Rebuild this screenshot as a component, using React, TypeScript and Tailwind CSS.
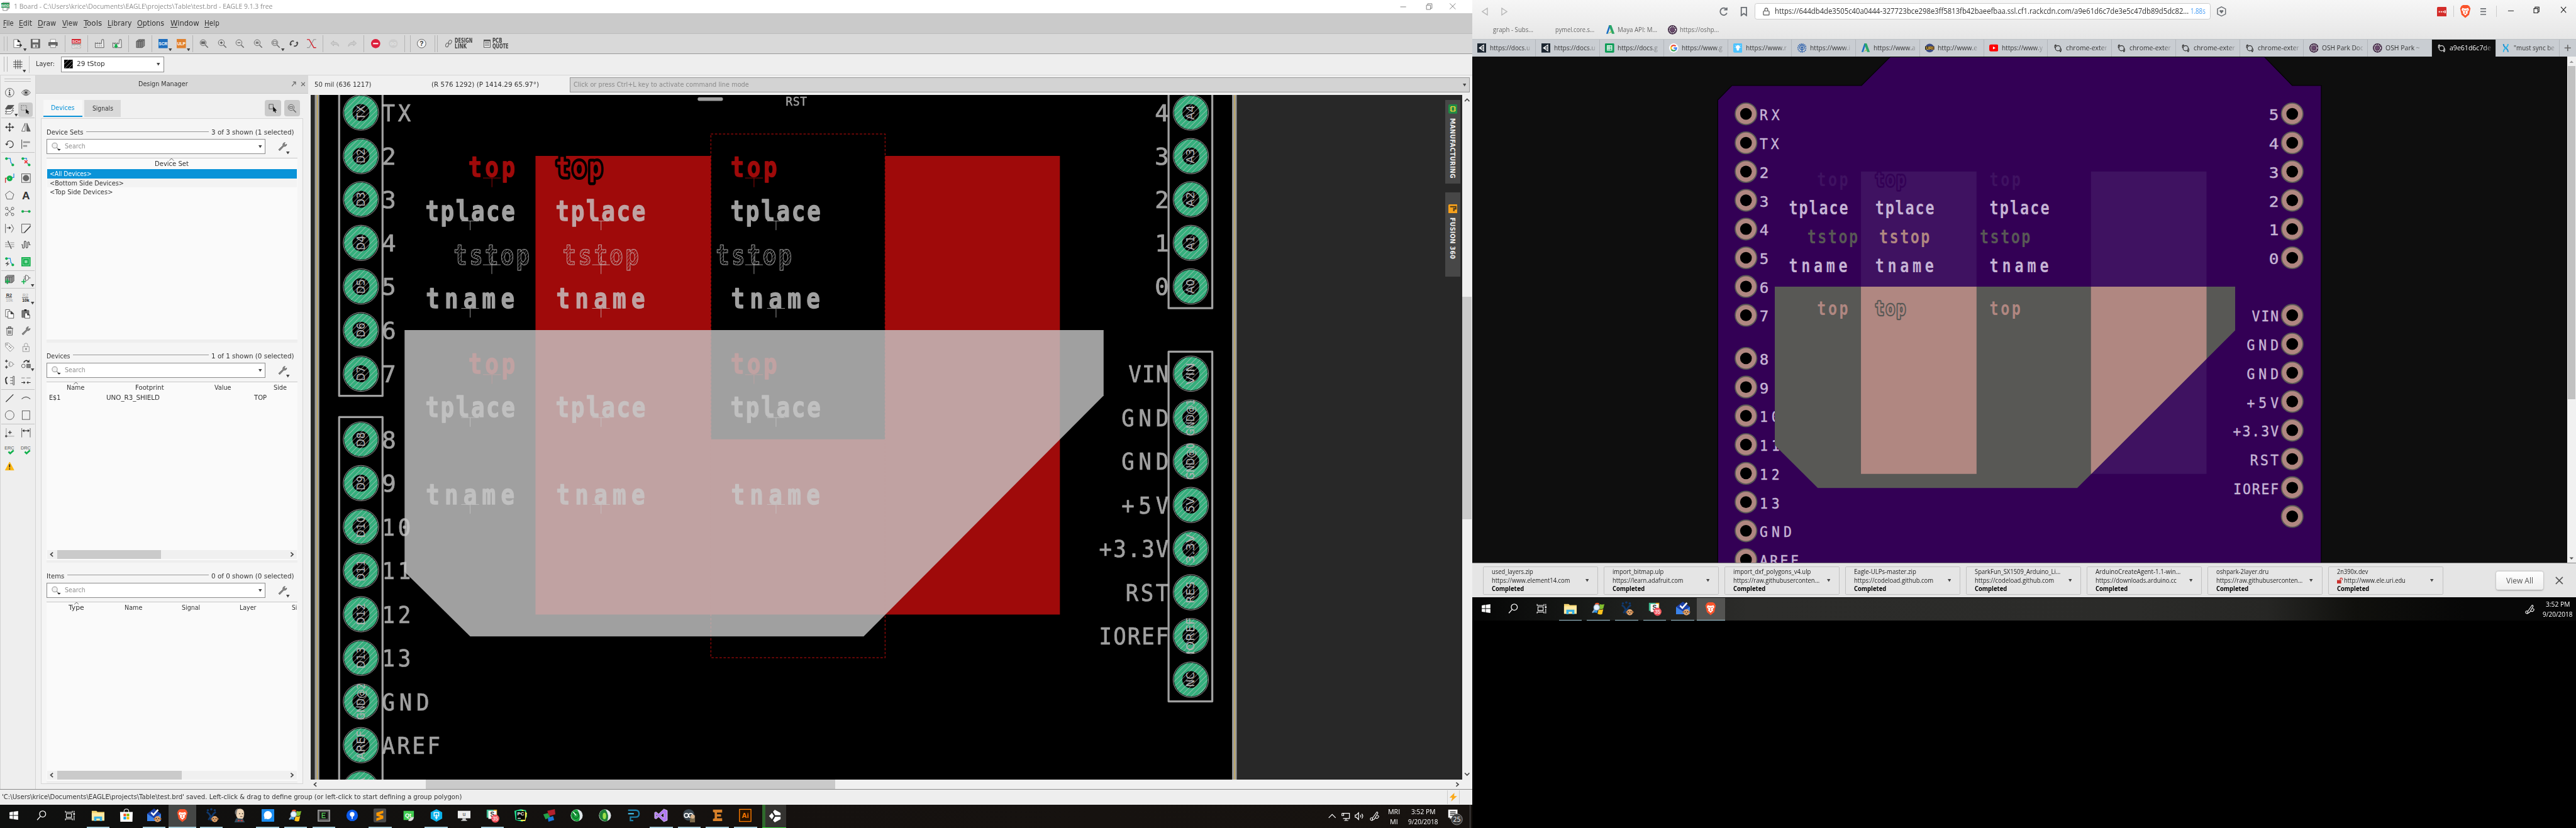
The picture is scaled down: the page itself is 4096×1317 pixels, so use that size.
import React, { useLayoutEffect, useRef } from "react";

/* ---------- text helpers ---------- */

/** One line of text condensed or stretched to occupy exactly `w` pixels. */
function T({ w, className = "", children }: { w: number; className?: string; children: React.ReactNode }) {
  const ref = useRef<HTMLSpanElement>(null);
  useLayoutEffect(() => {
    const outer = ref.current!;
    const inner = outer.firstElementChild as HTMLElement;
    inner.style.transform = "none";
    const k = outer.getBoundingClientRect().width / inner.getBoundingClientRect().width;
    inner.style.transform = `scaleX(${k})`;
  });
  return (
    <span ref={ref} className={"inline-block shrink-0 whitespace-nowrap " + className} style={{ width: w }}>
      <span className="inline-block origin-left">{children}</span>
    </span>
  );
}

const MONO = '"DejaVu Sans Mono", monospace';

/** Canvas text drawn between x0 and x1 on a baseline: narrow glyphs, widely spaced. */
function S({ x0, x1, y, size, t, bold, fill = "#c9c9c9", stroke, sw = 0, opacity = 1 }: {
  x0: number; x1: number; y: number; size: number; t: string; bold?: boolean; fill?: string; stroke?: string; sw?: number; opacity?: number;
}) {
  const ink = size * (bold ? 0.53 : 0.49);
  const k = t.length === 1 ? (x1 - x0) / ink : bold ? 0.8 : 0.92;
  const pitch = t.length === 1 ? 0 : (x1 - x0 - ink * k) / (t.length - 1);
  const spacing = t.length === 1 ? 0 : pitch / k - size * 0.602;
  return (
    <text transform={`translate(${x0 - size * 0.05 * k} ${y}) scale(${k} 1)`} letterSpacing={spacing} fontFamily={MONO} fontSize={size}
      fontWeight={bold ? 700 : 400} fill={fill} stroke={stroke ?? "none"} strokeWidth={sw} strokeLinejoin="round" paintOrder="stroke" opacity={opacity}>
      {t}
    </text>
  );
}

/* ---------- small icons ---------- */

function Ic({ children, s = "#555" }: { children?: React.ReactNode; s?: string }) {
  return (
    <svg viewBox="0 0 16 16" className="size-4 shrink-0 overflow-visible" fill="none" stroke={s} strokeWidth="1">
      {children}
    </svg>
  );
}
const Caret = ({ className = "" }: { className?: string }) => (
  <svg viewBox="0 0 6 5" className={"h-[5px] w-[6px] shrink-0 " + className}><path d="M0 0H6L3 5Z" fill="#444" /></svg>
);
const Mag = ({ children }: { children?: React.ReactNode }) => (
  <Ic s="#666"><circle cx="6.5" cy="6.5" r="5.2" /><path d="M10.3 10.3 15 15" strokeWidth="1.6" />{children}</Ic>
);
const Wrench = () => (
  <Ic><path d="M1 13 8.5 6C8 3 9.500 .8 12.500 .8L11 3 13 5 15.200 3.500C15.300 6.300 13 8 10.200 7.500L3 15Z" fill="#888" stroke="#555" strokeWidth=".8" /></Ic>
);
const G = "#12b04c", B = "#1b8ce0", D = "#333";
const Txt = ({ x, y, s, f, children, b = true }: { x: number; y: number; s: number; f: string; children: string; b?: boolean }) => (
  <text x={x} y={y} fontSize={s} fill={f} stroke="none" fontWeight={b ? 700 : 400} fontFamily='"Liberation Sans", sans-serif' textAnchor="middle">{children}</text>
);

type Tool = { i: React.ReactNode; c?: boolean; on?: boolean };
const topTools: (Tool | "|")[] = [
  { i: <Ic><path d="M1 1H8L12 5V15H1Z" fill="#fff" stroke="#777" /><path d="M8 1V5H12Z" fill="#222" stroke="#222" /><path d="M6 11H14M11.500 8.500 14.500 11 11.500 13.500" stroke="#222" strokeWidth="1.300" /></Ic>, c: true },
  { i: <Ic><path d="M.500 .500H15.500V15.500H.500Z" fill="#666" /><path d="M3 1H13V6H3Z" fill="#e8e8e8" stroke="none" /><path d="M3.500 9.500H12.500V15H3.500Z" fill="#ddd" stroke="none" /><path d="M9 10.500V14.500" strokeWidth="2" /></Ic> },
  { i: <Ic><path d="M3.500 .500H12.500V6H3.500Z" fill="#fff" stroke="#999" /><path d="M.500 6H15.500V11.500H.500Z" fill="#666" /><path d="M3.500 10H12.500V15H3.500Z" fill="#eee" stroke="#888" /></Ic> },
  "|",
  { i: <Ic><rect width="16" height="8" fill="#d3232e" stroke="none" /><rect y="8" width="16" height="8" fill="#aaa" stroke="none" /><Txt x={8} y={6.900} s={6.800} f="#fff">SCH</Txt><Txt x={8} y={15} s={6.800} f="#fff">BRD</Txt></Ic> },
  "|",
  { i: <Ic><path d="M.500 15V6.500L4 9V6.500L8 9V6.500L11 9 12 1H15L15.500 15Z" fill="#efefef" /><path d="M3 12H12" strokeDasharray="2 1.500" /></Ic> },
  { i: <Ic><path d="M.500 15V6.500L4 9V6.500L8 9V6.500L11 9 12 1H15L15.500 15Z" fill="#efefef" /><path d="M4 9H8V12H10L6 16 2 12H4Z" fill={G} stroke="none" /></Ic> },
  "|",
  { i: <Ic><path d="M1 4 5 1H15V12L11 15H1Z" fill="#888" /><path d="M1 4H11V15M11 4 15 1M4.500 4V15M8 4V15M4.500 4 8 1M8 4 12 1" /></Ic> },
  "|",
  { i: <Ic><rect width="16" height="16" fill="#1f6fbf" stroke="none" /><Txt x={8} y={10.700} s={7.200} f="#fff">SCR</Txt></Ic>, c: true },
  { i: <Ic><rect width="16" height="16" fill="#e0812e" stroke="none" /><Txt x={8} y={10.700} s={7.200} f="#fff">ULP</Txt></Ic>, c: true },
  "|",
  { i: <Mag><rect x="3.500" y="4.500" width="6" height="4" fill="#666" /></Mag> },
  { i: <Mag><path d="M6.500 4V9M4 6.500H9" stroke="#222" /></Mag> },
  { i: <Mag><path d="M4 6.500H9" stroke="#222" /></Mag> },
  { i: <Mag><path d="M4 5.500H9M4 7.500H9" stroke="#222" /></Mag> },
  { i: <Mag><rect x="3.500" y="4.500" width="6" height="4" /></Mag>, c: true },
  { i: <Ic><path d="M2 10C1 5 5 2.500 8 4M14 6C15 11 11 13.500 8 12" stroke="#444" strokeWidth="1.800" /><path d="M0 8.500H5L2.500 12ZM11 7.500H16L13.500 4Z" fill="#444" stroke="none" /></Ic> },
  { i: <Ic><path d="M0 15H4L12 1H16" stroke="#999" strokeWidth="1.300" /><path d="M0 1H4L12 15H16" stroke="#d3232e" strokeWidth="1.500" /></Ic> },
  "|",
  { i: <Ic s="#b5b5b5"><path d="M6 3 1 7.500 6 12V9.500C10 9 13 10 15 13 15 8 11 5.500 6 5.500Z" fill="#ccc" /></Ic> },
  { i: <Ic s="#b5b5b5"><path d="M10 3 15 7.500 10 12V9.500C6 9 3 10 1 13 1 8 5 5.500 10 5.500Z" fill="#ccc" /></Ic> },
  "|",
  { i: <Ic><circle cx="8" cy="8" r="8" fill="#dc1f3c" stroke="none" /><path d="M3.500 8H12.500" stroke="#fff" strokeWidth="2.200" /></Ic> },
  { i: <Ic><circle cx="8" cy="8" r="7.800" fill="#cdcdcd" stroke="none" /><Txt x={8} y={10.500} s={7} f="#e6e6e6">GO</Txt></Ic> },
  "|", "|",
  { i: <Ic><circle cx="8" cy="8" r="7.500" fill="#f4f4f4" /><Txt x={8} y={12} s={11} f="#333">?</Txt></Ic> },
];

const sideTools: ([Tool, Tool | null] | "-")[] = [
  [{ i: <Ic><circle cx="8" cy="8" r="7.500" /><path d="M8 7V12M6 12H10M6.500 7H8" stroke={D} strokeWidth="1.400" /><circle cx="8" cy="4" r="1.200" fill={D} stroke="none" /></Ic> },
   { i: <Ic><path d="M.500 8C4 1.500 12 1.500 15.500 8 12 14.500 4 14.500 .500 8Z" /><circle cx="8" cy="8" r="4" /><circle cx="8" cy="8" r="2" fill={D} /></Ic> }],
  [{ i: <Ic><path d="M5 9.500 15 9.500 10 15.500H.500Z" fill="#fff" /><path d="M5 5.500H15L10 11.500H.500Z" fill="#fff" /><path d="M5 .500H15.500L10 7H.500Z" fill="#555" /></Ic>, c: true },
   { i: <Ic><path d="M1 1H10V9H1Z" strokeDasharray="1.500 1.500" /><path d="M9 7V15L11 13 12.500 16 14 15 12.500 12.500H15Z" fill="#111" stroke="none" /></Ic>, on: true }],
  "-",
  [{ i: <Ic s={D}><path d="M2 8H14M8 2V14" strokeWidth="1.300" /><path d="M0 8 3.500 5.500V10.500ZM16 8 12.500 5.500V10.500ZM8 0 5.500 3.500H10.500ZM8 16 5.500 12.500H10.500Z" fill={D} stroke="none" /></Ic> },
   { i: <Ic><path d="M6.500 1V15H.500Z" fill="#fff" /><path d="M9.500 1V15H15.500Z" fill="#666" /></Ic> }],
  [{ i: <Ic s={D}><path d="M3 8C3 3 7 1.500 10 2.500 14.500 4 15.500 9 13 12 11.500 14 9 14 7.500 13.500" strokeWidth="1.300" /><path d="M0 7H6L3 10.500Z" fill={D} stroke="none" /></Ic> },
   { i: <Ic><path d="M.700 0V16" stroke={D} /><path d="M3 4.500H15M3 11H10" stroke="#999" strokeWidth="3" /></Ic> }],
  "-",
  [{ i: <Ic><path d="M2 2H9L10 9 14 14" stroke={B} strokeWidth="1.300" /><circle cx="2.500" cy="2.500" r="2.300" fill={G} stroke="none" /><circle cx="13.500" cy="13.500" r="2.300" fill={G} stroke="none" /></Ic> },
   { i: <Ic><path d="M2 2H9V5M10 10 14 14" stroke={B} strokeWidth="1.300" /><circle cx="2.500" cy="2.500" r="2.300" fill={G} stroke="none" /><circle cx="13.500" cy="13.500" r="2.300" fill={G} stroke="none" /><path d="M5.500 5.500 10.500 10.500M10.500 5.500 5.500 10.500" stroke="#e33" strokeWidth="1.800" /></Ic> }],
  [{ i: <Ic><path d="M.700 16V8H6" stroke="#c33" strokeWidth="1.500" /><path d="M15.300 0V7H10" stroke={B} strokeWidth="1.300" /><circle cx="8" cy="8.500" r="5" fill={G} stroke="none" /><circle cx="8" cy="8.500" r=".800" fill="#fff" stroke="none" /></Ic> },
   { i: <Ic><rect x=".500" y=".500" width="15" height="15" /><circle cx="8" cy="8" r="5.500" fill="#666" stroke="none" /></Ic> }],
  [{ i: <Ic><path d="M8 1 15.300 6.500 12.500 15H3.500L.700 6.500Z" /></Ic> },
   { i: <Ic><Txt x={8} y={15} s={19} f="#333">A</Txt></Ic> }],
  [{ i: <Ic><path d="M4 4 12 12M12 4 4 12" /><circle cx="2.800" cy="2.800" r="2.200" /><circle cx="13.200" cy="2.800" r="2.200" /><circle cx="2.800" cy="13.200" r="2.200" /><circle cx="13.200" cy="13.200" r="2.200" /></Ic> },
   { i: <Ic><path d="M2 8H14" stroke="#777" strokeWidth="1.400" /><circle cx="2.300" cy="8" r="2.300" fill={G} stroke="none" /><circle cx="13.700" cy="8" r="2.300" fill={G} stroke="none" /></Ic> }],
  [{ i: <Ic><path d="M.700 0V16M11 1 15 8 11 15" /><path d="M3 7H8" stroke={D} /><path d="M7 4.500 10.500 7 7 9.500Z" fill={D} stroke="none" /></Ic> },
   { i: <Ic><path d="M15.500 5V.500H.500V15.500H5" /><path d="M5 15.500 15.500 4.500" strokeWidth="1.600" stroke={D} /></Ic> }],
  [{ i: <Ic s="#888"><path d="M0 4.500H6M0 8H7M0 11.500H8M9 4.500H16M9.500 8H16M10.500 11.500H16" /><path d="M5 1 11 15" stroke={D} strokeWidth="1.200" /></Ic> },
   { i: <Ic><path d="M0 8H2V13Q3.500 15 5 13V3Q6.500 .500 8 3V12Q9.500 15 11 12V4Q12.500 2 13.500 4V8H16" stroke="#444" strokeWidth="1.200" /></Ic> }],
  [{ i: <Ic><path d="M2 2H9L10 9 14 14" stroke={B} strokeWidth="1.300" /><circle cx="2.500" cy="2.500" r="2.300" fill={G} stroke="none" /><circle cx="13.500" cy="13.500" r="2.300" fill={G} stroke="none" /><path d="M6 7 0 12H4L2 16 8 11H4.500Z" fill="#555" stroke="none" /></Ic> },
   { i: <Ic><rect width="16" height="16" fill={G} stroke="none" /><rect x="2.500" y="2.500" width="11" height="11" stroke="#fff" strokeDasharray="1.200 1" /><rect x="5.500" y="5.500" width="5" height="5" fill="#8fe0ae" stroke="none" /></Ic> }],
  "-",
  [{ i: <Ic><path d="M.500 4 4 1H15.500V11L12 14H.500Z" fill="#999" /><path d="M.500 4H12V14M12 4 15.500 1M4 4V14M8 4V14" /><path d="M4 7V16M0 11.500H8.500" stroke={G} strokeWidth="2" /></Ic> },
   { i: <Ic><path d="M7 1H9Q13 2 13 5.500 13 9 9 10H7ZM4 4H7M4 7H7M13 5.500H16" /><path d="M4 8V16M0 12H8" stroke={G} strokeWidth="1.800" /></Ic>, c: true }],
  "-",
  [{ i: <Ic><Txt x={7} y={7} s={8} f="#333">R2</Txt><path d="M1 8H12" /><Txt x={7.500} y={15} s={7.500} f="#bbb">10k</Txt></Ic> },
   { i: <Ic><Txt x={7} y={7} s={8} f="#bbb">R2</Txt><path d="M1 8H12" /><Txt x={7.500} y={15} s={7.500} f="#222">10k</Txt></Ic>, c: true }],
  [{ i: <Ic><path d="M1 .500H8V13H1Z" fill="#fff" /><path d="M5 3.500H11L15 7.500V15.500H5Z" fill="#fff" /><path d="M10 3.500V8H15Z" fill="#222" /></Ic> },
   { i: <Ic><path d="M1 2H13V14H1Z" fill="#777" /><path d="M5 0H9V3H5Z" fill="#222" stroke="none" /><path d="M6 6.500H11L14.500 10V15.500H6Z" fill="#fff" /><path d="M10.500 6.500V10H14.500Z" fill="#222" /></Ic> }],
  [{ i: <Ic><path d="M3 4H13L12.500 15.500H3.500Z" fill="#eee" /><path d="M2 3.500H14M6 3V1H10V3" strokeWidth="1.400" /><path d="M6 7V13M8 7V13M10 7V13" strokeWidth="1.200" /></Ic> },
   { i: <Wrench /> }],
  [{ i: <Ic s="#888"><path d="M.500 1 6 .500 15.500 9 9 15.500 1 7Z" fill="#f8f8f8" /><circle cx="3.500" cy="3.500" r="1.200" /><path d="M6 8 9 5.500M8 10.500 11.500 7.500M6 5 11 10" /></Ic> },
   { i: <Ic s="#999"><rect x="2.500" y="7" width="11" height="8.500" fill="#eee" /><path d="M5 7V4Q5 1 8 1 11 1 11 4V7" /><circle cx="8" cy="11" r="1.200" fill="#555" /></Ic> }],
  [{ i: <Ic><path d="M2.500 0V5M0 2.500H5M2.500 10.500V15.500M0 13H5" stroke={D} strokeWidth="1.300" /><path d="M8 4H10Q14 5 14 8 14 11 10 12H8ZM5.500 6.500H8M5.500 9.500H8M14 8H16" stroke="#888" /></Ic> },
   { i: <Ic><path d="M4 5Q8 -1 12 3.500" stroke={D} strokeWidth="1.800" /><path d="M9.500 5H14V0Z" fill={D} stroke="none" /><circle cx="3.500" cy="11" r="3.200" /><rect x="9.500" y="8" width="6" height="6" fill="#888" /></Ic>, c: true }],
  [{ i: <Ic><path d="M4 2Q0 4 1.500 8 1 12 4 14" stroke={D} strokeWidth="2" /><path d="M9 3H14M9 8H14M9 13H14" /><path d="M14 .500H16V15.500H14Z" fill="#fff" /></Ic> },
   { i: <Ic><path d="M0 3.500H6M9 3.500H16" stroke="#999" strokeWidth="1.400" /><path d="M0 11.500H5M11 11.500H16" stroke={D} strokeWidth="1.300" /><path d="M4 9 7 11.500 4 14ZM12 9 9 11.500 12 14Z" fill={D} stroke="none" /></Ic> }],
  "-",
  [{ i: <Ic><path d="M1.500 14.500 14.500 1.500" strokeWidth="1.300" stroke={D} /></Ic> }, { i: <Ic><path d="M.500 9.500Q8 2 15.500 9.500" strokeWidth="1.300" /></Ic> }],
  [{ i: <Ic><ellipse cx="8" cy="8" rx="7.700" ry="7.800" /></Ic> }, { i: <Ic><rect x="1.500" y=".500" width="13" height="15" /></Ic> }],
  "-",
  [{ i: <Ic s="#bbb"><path d="M2 0V14H16" strokeWidth="1.800" /><circle cx="2" cy="14" r="2" fill="#555" stroke="none" /><path d="M8.500 4.500V10.500M5.500 7.500H11.500" stroke={D} strokeWidth="1.300" /></Ic> },
   { i: <Ic><path d="M.700 0V16M15.300 0V16" /><path d="M3 4.500H13" stroke={D} strokeWidth="1.300" /><path d="M1.500 4.500 5 2V7ZM14.500 4.500 11 2V7Z" fill={D} stroke="none" /></Ic> }],
  [{ i: <Ic><Txt x={7.500} y={7.500} s={8} f="#555" b={false}>ERC</Txt><path d="M6 11.500 9 14.500 15 9" stroke={G} strokeWidth="2.800" /></Ic> },
   { i: <Ic><Txt x={7.500} y={7.500} s={8} f="#555" b={false}>DRC</Txt><path d="M6 11.500 9 14.500 15 9" stroke={G} strokeWidth="2.800" /></Ic> }],
  [{ i: <Ic><path d="M8 1 15.500 15H.500Z" fill="#fdb813" stroke="#fdb813" /><path d="M8 5V10.500M8 12V14" stroke="#222" strokeWidth="1.800" /></Ic> }, null],
];

const Grip = () => (
  <div className="flex h-[26px] w-[15px] shrink-0 gap-1 pl-[7px]"><div className="w-px bg-[#b8b8b8]" /><div className="w-px bg-[#b8b8b8]" /></div>
);

/* ---------- EAGLE window ---------- */

const menus: [string, number, number][] = [
  ["File", 18, 10], ["Edit", 23, 10], ["Draw", 32, 10], ["View", 27, 10], ["Tools", 32, 10], ["Library", 42, 10], ["Options", 47, 10], ["Window", 50, 10], ["Help", 26, 0],
];

function TopBars() {
  return (
    <>
      <div className="flex h-[23px] shrink-0 items-center bg-white text-[12px] text-[#8f8f8f]">
        <svg viewBox="0 0 16 16" className="ml-[2px] size-4"><path d="M3 1H14V11L10 15H3Z" fill="#fff" stroke="#888" /><path d="M10 15V11H14" fill="#ddd" stroke="#888" /><rect x="0" y="2" width="14" height="8" fill="#158a43" /><text x="7" y="8.600" fontSize="6.500" fontWeight="700" textAnchor="middle" fill="#fff" fontFamily="Liberation Sans">BRD</text></svg>
        <T w={450} className="ml-[6px] font-['Open_Sans',sans-serif]">1 Board - C:\Users\krice\Documents\EAGLE\projects\Table\test.brd - EAGLE 9.1.3 free</T>
        <div className="flex-1" />
        <svg viewBox="0 0 116 12" className="mr-[14px] h-3 w-[116px] text-[#777]" fill="none" stroke="currentColor" strokeWidth="1"><path d="M5 6.500H15M50.500 3.500H57.500V11H50.500ZM52.500 3.500V1H60V9H57.500M91 .500 101 10.500M101 .500 91 10.500" /></svg>
      </div>
      <div className="flex h-[36px] shrink-0 items-center border-b border-[#bdbdbd] bg-[#cacaca] pl-[5px] text-[14px] text-[#333]">
        {menus.map(([m, w, g]) => (
          <div key={m} className="flex"><T w={w}><span className="underline underline-offset-2">{m[0]}</span>{m.slice(1)}</T><div style={{ width: g }} /></div>
        ))}
      </div>
      <div className="flex h-[35px] shrink-0 items-center border-b-[1.5px] border-[#999] bg-[#d9d9d9]">
        <Grip />
        {topTools.map((t, i) => t === "|" ? (
          <div key={i} className="flex h-[30px] w-[9px] shrink-0 justify-center"><div className="w-px bg-[#b4b4b4]" /></div>
        ) : (
          <div key={i} className="relative flex w-[31.1px] shrink-0 justify-center">{t.i}{t.c && <Caret className="absolute right-0 -bottom-[5px]" />}</div>
        ))}
        <div className="ml-[7px] flex h-[30px] gap-1"><div className="w-px bg-[#b4b4b4]" /><div className="w-px bg-[#b4b4b4]" /></div>
        <div className="ml-[13px] flex items-center gap-[4px] text-[10.500px] leading-[10px] font-bold text-[#444]">
          <svg viewBox="0 0 14 16" className="h-4 w-3" fill="none" stroke="#555" strokeWidth="1.200"><rect x="1" y="7" width="5.500" height="8" rx="2.500" transform="rotate(25 4 11)" /><rect x="7" y="1" width="5.500" height="8" rx="2.500" transform="rotate(25 10 5)" /></svg>
          <div className="flex flex-col"><T w={31}>DESIGN</T><T w={21}>LINK</T></div>
          <svg viewBox="0 0 12 14" className="ml-[15px] h-[14px] w-3" fill="none" stroke="#555"><rect x=".500" y=".500" width="11" height="13" fill="#eee" /><path d="M0 1.500H12" strokeWidth="3" /><path d="M2 5H10M2 7.500H10M2 10H10" /></svg>
          <div className="flex flex-col"><T w={17}>PCB</T><T w={28}>QUOTE</T></div>
        </div>
      </div>
      <div className="flex h-[37px] shrink-0 items-center border-b border-[#d6d6d6] bg-[#eee] text-[12px] text-[#333]">
        <Grip />
        <div className="relative flex w-[31px] justify-center"><Ic s="#444"><path d="M4 0V16M8 0V16M12 0V16M0 4H16M0 8H16M0 12H16" /></Ic><Caret className="absolute right-[1px] -bottom-[6px]" /></div>
        <div className="ml-[4px] h-[30px] w-px bg-[#c4c4c4]" />
        <T w={33} className="ml-[11px]">Layer:</T>
        <div className="ml-[11px] flex h-[27px] w-[179px] items-center border border-[#8c8c8c] bg-white pl-[5px]">
          <svg viewBox="0 0 15 15" className="size-[15px]"><rect width="15" height="15" /><path d="M0 8 8 0M1 15 15 1M8 15 15 8" stroke="#aaa" strokeWidth="1" /></svg>
          <T w={49} className="ml-[6px]">29 tStop</T>
          <Caret className="mr-[5px] ml-auto" />
        </div>
      </div>
    </>
  );
}

function SideBar() {
  return (
    <div className="flex w-[62px] shrink-0 flex-col border-x border-[#d3d3d3] bg-[#eee] px-[1px] pt-[6px]">
      <div className="mx-[6px] h-[5px] shrink-0 border-y border-[#c0c0c0]" />
      <div className="h-[5px] shrink-0" />
      {sideTools.map((r, i) => r === "-" ? <div key={i} className="h-[2px] shrink-0 border-t border-[#c4c4c4]" /> : (
        <div key={i} className="flex h-[29px] shrink-0 items-center">
          {r.map((t, j) => t && (
            <div key={j} className={"relative flex items-center justify-center " + (t.on ? "ml-[1px] h-[25px] w-[25px] rounded-sm bg-[#cacaca]" : "ml-0 w-[29px]")}>
              {t.i}{t.c && <Caret className="absolute right-0 -bottom-[5px]" />}
            </div>
          ))}
        </div>
      ))}
    </div>
  );
}

function HScroll({ thumb }: { thumb: string }) {
  return (
    <div className="mx-px mb-[2px] flex h-[15px] shrink-0 items-center bg-[#f0f0f0]">
      <svg viewBox="0 0 17 15" className="h-[15px] w-[17px]"><path d="M10 4 6 7.500 10 11" fill="none" stroke="#444" strokeWidth="1.800" /></svg>
      <div className={"h-full bg-[#cacaca] " + thumb} />
      <svg viewBox="0 0 17 15" className="ml-auto h-[15px] w-[17px]"><path d="M7 4 11 7.500 7 11" fill="none" stroke="#444" strokeWidth="1.800" /></svg>
    </div>
  );
}

function Section({ title, tw, count, cw, grow, children }: { title: string; tw: number; count: string; cw: number; grow: string; children: React.ReactNode }) {
  return (
    <div className={"flex shrink-0 flex-col " + grow}>
      <div className="flex h-[35px] shrink-0 items-end gap-[5px] pr-[5px] pb-[3px] leading-[16px]">
        <T w={tw}>{title}</T><div className="mb-[10px] h-px flex-1 bg-[#999]" /><T w={cw}>{count}</T>
      </div>
      <div className="flex shrink-0 items-start">
        <div className="flex h-[26px] w-[381px] items-center border border-[#8c8c8c] bg-white pl-[7px]">
          <svg viewBox="0 0 18 16" className="h-4 w-[18px]" fill="none" stroke="#888"><circle cx="5.500" cy="6" r="4.500" fill="#f2f2f2" /><path d="M9 9.500 13 13" strokeWidth="1.300" /><path d="M10 12H16L13 15Z" fill="#222" stroke="none" /></svg>
          <T w={36} className="ml-[5px] text-[#909090]">Search</T>
          <Caret className="mr-[5px] ml-auto" />
        </div>
        <div className="relative ml-[21px] pt-[5px]"><Wrench /><Caret className="absolute -right-[5px] -bottom-[5px]" /></div>
      </div>
      <div className="mt-[7px] flex flex-1 flex-col overflow-hidden border-t border-[#c8c8c8] bg-[#fafafa]">{children}</div>
      <div className="h-[5px] shrink-0 bg-[#eee]" />
    </div>
  );
}

const SortMark = () => <svg viewBox="0 0 8 4" className="absolute top-0 left-1/2 -ml-1 h-1 w-2"><path d="M0 4 4 0 8 4" fill="none" stroke="#555" /></svg>;

function Cols({ items }: { items: [string, number, number, boolean?][] }) {
  return (
    <div className="flex h-[18px] shrink-0 leading-[20px]">
      {items.map(([t, gap, w, sort]) => (
        <div key={t} className="flex shrink-0"><div className="shrink-0" style={{ width: gap }} /><div className="relative shrink-0">{sort && <SortMark />}<T w={w}>{t}</T></div></div>
      ))}
    </div>
  );
}

function DesignManager() {
  return (
    <div className="flex w-[478px] shrink-0 flex-col bg-[#f0f0f0] text-[12px] text-[#333]">
      <div className="mr-[4px] flex h-[32px] shrink-0 items-center border-b border-[#c8c8c8] bg-[#d9d9d9] pl-[179px]">
        <T w={86}>Design Manager</T>
        <svg viewBox="0 0 24 10" className="mr-[5px] ml-auto h-[10px] w-6" fill="none" stroke="#666" strokeWidth="1.300"><path d="M0 9 6 2M2 1.500H6.500V6M16.500 2 23 8.500M23 2 16.500 8.500" /></svg>
      </div>
      <div className="flex h-[43px] shrink-0 items-start pt-[11px] pl-[13px]">
        <div className="flex h-[30px] w-[68px] items-center justify-center border-b-[3px] border-[#0a93d8] bg-[#f7f7f7] text-[#0a93d8]"><T w={41}>Devices</T></div>
        <div className="ml-1 flex h-[30px] w-[63px] items-center justify-center bg-[#d9d9d9]"><T w={36}>Signals</T></div>
        <div className="ml-auto flex size-[28px] items-center justify-center rounded-sm bg-[#cacaca]"><Ic><path d="M1 1H8V9H1Z" /><path d="M8 5V14L10 12.500 11.500 15.500 13 15 11.500 12H14.500Z" fill="#111" stroke="none" /></Ic></div>
        <div className="mr-[18px] ml-[5px] flex size-[28px] items-center justify-center rounded-sm bg-[#cacaca]"><Mag><rect x="4" y="5" width="5" height="3" /></Mag></div>
      </div>
      <div className="mr-[13px] ml-[9px] flex h-[1158px] shrink-0 flex-col border border-[#d6d6d6] bg-[#f5f5f5] pr-[9px] pl-[9px]">
        <Section title="Device Sets" tw={64} count="3 of 3 shown (1 selected)" cw={144} grow="h-[389px]">
          <Cols items={[["Device Set", 188, 59, true]]} />
          <div className="mx-px h-[16px] bg-[#0a93d8] pl-1 leading-[17px] text-white"><T w={73}>&lt;All Devices&gt;</T></div>
          <div className="mx-px h-[16px] bg-[#f3f3f3] pl-1 leading-[17px]"><T w={129}>&lt;Bottom Side Devices&gt;</T></div>
          <div className="mx-px h-[16px] pl-1 leading-[17px]"><T w={110}>&lt;Top Side Devices&gt;</T></div>
        </Section>
        <Section title="Devices" tw={41} count="1 of 1 shown (0 selected)" cw={144} grow="h-[383px]">
          <Cols items={[["Name", 35, 31, true], ["Footprint", 88, 50], ["Value", 88, 29], ["Side", 74, 23]]} />
          <div className="flex h-[16px] leading-[17px]"><T w={20} className="ml-1">E$1</T><T w={93} className="ml-[80px]">UNO_R3_SHIELD</T><T w={22} className="ml-[164px]">TOP</T></div>
          <div className="flex-1" /><HScroll thumb="w-[181px]" />
        </Section>
        <Section title="Items" tw={31} count="0 of 0 shown (0 selected)" cw={144} grow="h-[384px]">
          <Cols items={[["Type", 38, 27, true], ["Name", 70, 31], ["Signal", 69, 32], ["Layer", 69, 29], ["Si", 61, 9]]} />
          <div className="flex-1" /><HScroll thumb="w-[217px]" />
        </Section>
      </div>
    </div>
  );
}

/* ---------- layout canvas ---------- */

const leftPads: [number, string, string, number][] = [
  [195.600, "TX", "TX", 46], [271.400, "2", "D2", 20], [346.600, "3", "D3", 20], [422.400, "4", "D4", 20], [498.200, "5", "D5", 20], [574.200, "6", "D6", 20], [650, "7", "D7", 20],
  [764.500, "8", "D8", 20], [840.300, "9", "D9", 20], [916.500, "10", "D10", 46], [992.300, "11", "D11", 46], [1068.400, "12", "D12", 46], [1144.200, "13", "D13", 46], [1220.300, "GND", "GND@2", 78], [1296.200, "AREF", "AREF", 97], [1372, "", "SDA", 0],
];
const rightPads: [number, string, string, number][] = [
  [195.600, "4", "A4", 20], [271.400, "3", "A3", 20], [346.600, "2", "A2", 20], [422.400, "1", "A1", 20], [498.200, "0", "A0", 20],
  [650, "VIN", "VIN", 66], [726.200, "GND", "GND@1", 78], [802.400, "GND", "GND@0", 78], [878.300, "+5V", "5V", 78], [954.400, "+3.3V", "3.3V", 117], [1030.300, "RST", "RES", 71], [1106.400, "IOREF", "IOREF", 117], [1182.200, "", "NC", 0],
];

function Pad({ x, y, name }: { x: number; y: number; name: string }) {
  return (
    <g>
      <circle cx={x} cy={y} r={22} fill="none" stroke="#34ae7c" strokeWidth={14.500} />
      <circle cx={x} cy={y} r={29.500} fill="url(#hatch)" />
      <circle cx={x} cy={y} r={30.800} fill="none" stroke="#a8a8a8" strokeWidth={1} />
      <text transform={`translate(${x + 6.500} ${y}) rotate(-90)`} textAnchor="middle" fontFamily='"DejaVu Sans", sans-serif' fontSize={19.500} textLength={name.length * 12.800} lengthAdjust="spacingAndGlyphs" fill="#b4b4b4">{name}</text>
    </g>
  );
}

function Cross({ x, y, c, up }: { x: number; y: number; c: string; up?: boolean }) {
  return <path d={`M${x - 15.500} ${y}H${x + 15.500}M${x} ${up ? y - 15 : y}V${y + 16}`} stroke={c} strokeWidth={1} fill="none" />;
}

const A = 0.795;
const tp: [number, number, number][] = [[741.500, 894.500, 817.400], [968, 1121.500, 1045], [1272, 1426, 1349.300]];

function BoardCanvas() {
  return (
    <svg viewBox="540 165 2003 1191" className="h-[1191px] w-[2003px] bg-black">
      <defs>
        <pattern id="hatch" width="6.500" height="6.500" patternUnits="userSpaceOnUse" patternTransform="rotate(45)"><path d="M0 0V6.500" stroke="#c9c9c9" strokeWidth="1.300" /></pattern>
        <pattern id="hatch2" width="4.500" height="4.500" patternUnits="userSpaceOnUse" patternTransform="rotate(45)"><path d="M0 0V4.500" stroke="#c9c9c9" strokeWidth="1.200" /></pattern>
      </defs>
      <path d="M540 165H547V1356H540ZM2150 165H2543V1356H2150Z" fill="#282828" />
      <path d="M547 165H555V1356H547ZM2142.500 165H2150.500V1356H2142.500Z" fill="#9d9d9d" />
      <path d="M551.500 165V1356M2147 165V1356" stroke="#d6ae3c" strokeWidth="1.200" />

      <path d="M931 271H1236V764H1539V271H1843V1069H931Z" fill="#9f0a0a" />
      <rect x="1236" y="233" width="303" height="911" fill="none" stroke="#9f0a0a" strokeWidth="1.300" strokeDasharray="4 3" />
      {[[816, 894.500, 308.500], [1272, 1350, 308.500], [816, 894.500, 650.600], [1272, 1350, 650.600]].map(([a, b, y], i) => (
        <g key={i}><S x0={a} x1={b} y={y - 1} size={49} t="top" bold fill="#9f0a0a" stroke="#9f0a0a" sw={1.500} /><Cross x={(a + b) / 2} y={y + 1} c="#9f0a0a" /></g>
      ))}
      <S x0={968.500} x1={1046} y={307.500} size={49} t="top" bold fill="#9f0a0a" stroke="#000" sw={10} />

      <path d="M703.300 574H1919V688L1501.700 1107H817.400L703.300 994.600Z" fill="#c9c9c9" opacity={A} />
      {[384.300, 726.400].map((y) => tp.map(([a, b, c]) => (
        <g key={y + "-" + a} opacity={A}><S x0={a} x1={b} y={y - 1} size={49} t="tplace" bold stroke="#c9c9c9" sw={1.500} /><Cross x={c} y={y} c="#c9c9c9" /></g>
      )))}
      {[536.300, 877.500].map((y) => tp.map(([a, b, c]) => (
        <g key={y + "-" + a} opacity={A}><S x0={a + 1} x1={b - 1} y={y - 1} size={49} t="tname" bold stroke="#c9c9c9" sw={1.500} /><Cross x={c} y={y} c="#c9c9c9" /></g>
      )))}
      {[[790.600, 920, 855], [980, 1110, 1045], [1246.600, 1376, 1311]].map(([a, b, c]) => (
        <g key={a} opacity={A}>
          <S x0={a} x1={b} y={460} size={49} t="tstop" bold fill="url(#hatch2)" stroke="#c9c9c9" sw={1.100} />
          <Cross x={c} y={460.500} c="#c9c9c9" up />
        </g>
      ))}

      <g fill="none" stroke="#a0a0a0" strokeWidth="3.500" strokeLinejoin="round">
        <path d="M589.500 160V688.500H665V160M589.500 1360V725.500H665V1360M2032 160V536H2108V160" />
        <rect x="2032" y="611.600" width="76" height="608.400" />
      </g>
      {leftPads.map(([y, t, n, w]) => (
        <g key={y}><Pad x={627.400} y={y} name={n} />{t && <S x0={666} x1={666 + w} y={y + 15} size={40.500} t={t} stroke="#c9c9c9" sw={0.800} opacity={A} />}</g>
      ))}
      {rightPads.map(([y, t, n, w]) => (
        <g key={y}><Pad x={2070.700} y={y} name={n} />{t && <S x0={2030 - w} x1={2030} y={y + 15} size={40.500} t={t} stroke="#c9c9c9" sw={0.800} opacity={A} />}</g>
      ))}
      <rect x="1213" y="169" width="44" height="6.500" rx="3" fill="#a0a0a0" />
      <S x0={1367} x1={1402} y={184} size={21.500} t="RST" opacity={A} stroke="#c9c9c9" sw={0.500} />
    </svg>
  );
}

function SideTab({ h, color, pt, glyph, children }: { h: string; color: string; pt: string; glyph: React.ReactNode; children: string }) {
  return (
    <div className={"flex w-[27px] flex-col items-center gap-[8px] bg-[#474747] " + h + " " + pt}>
      <svg viewBox="0 0 16 16" className="size-4"><rect width="16" height="16" rx="2" fill={color} />{glyph}</svg>
      <div className="text-[11.500px] leading-[14px] font-bold tracking-[0.3px] whitespace-nowrap text-[#eee] [writing-mode:vertical-rl]">{children}</div>
    </div>
  );
}

function Editor() {
  return (
    <div className="flex w-[2020px] shrink-0 flex-col">
      <div className="flex h-[34px] shrink-0 items-center bg-[#f0f0f0] pl-[7px] text-[12px] text-[#333]">
        <T w={99}>50 mil (636 1217)</T>
        <T w={187} className="ml-[104px]">(R 576 1292) (P 1414.29 65.97°)</T>
        <div className="ml-[54px] flex h-[26px] w-[1565px] items-center border-[1.5px] border-[#979797] bg-[#d3d3d3] pl-[6px] text-[#8a8a8a]">
          <T w={305}>Click or press Ctrl+L key to activate command line mode</T><Caret className="mr-[5px] ml-auto" />
        </div>
      </div>
      <div className="flex h-[1191px] shrink-0">
        <div className="relative w-[2003px] shrink-0">
          <BoardCanvas />
          <div className="absolute top-[9px] right-[3px] flex flex-col gap-[16px]">
            <SideTab h="h-[145px]" pt="pt-[8px]" color="#1f8b45" glyph={<path d="M5 4H11V12H5ZM3 5.500H5M3 8H5M3 10.500H5M11 5.500H13M11 8H13M11 10.500H13" stroke="#f3d23b" strokeWidth="1.400" fill="none" />}>MANUFACTURING</SideTab>
            <SideTab h="h-[146px]" pt="pt-[20px]" color="#f6a11c" glyph={<path d="M3 4H13V8H9.500V6M9.500 9V12" stroke="#4d3a1a" strokeWidth="2.200" fill="none" />}>FUSION 360</SideTab>
          </div>
        </div>
        <div className="flex w-[17px] flex-col items-center bg-[#f0f0f0]">
          <svg viewBox="0 0 17 17" className="size-[17px]"><path d="M4.500 11 8.500 7 12.500 11" fill="none" stroke="#444" strokeWidth="1.800" /></svg>
          <div className="mt-[334px] h-[388px] w-[16px] bg-[#cacaca]" />
          <svg viewBox="0 0 17 17" className="mt-auto size-[17px]"><path d="M4.500 6 8.500 10 12.500 6" fill="none" stroke="#444" strokeWidth="1.800" /></svg>
        </div>
      </div>
      <div className="flex h-[17px] shrink-0 items-center bg-[#f0f0f0]">
        <svg viewBox="0 0 17 17" className="size-[17px]"><path d="M10 5 6 8.500 10 12" fill="none" stroke="#444" strokeWidth="1.800" /></svg>
        <div className="ml-[183px] h-[16px] w-[713px] bg-[#cacaca]" />
        <svg viewBox="0 0 17 17" className="mr-[17px] ml-auto size-[17px]"><path d="M7 5 11 8.500 7 12" fill="none" stroke="#444" strokeWidth="1.800" /></svg>
      </div>
    </div>
  );
}

/* ---------- task bars ---------- */

function App24({ children }: { children: React.ReactNode }) {
  return <svg viewBox="0 0 24 24" className="size-[24px] overflow-visible">{children}</svg>;
}
const Label = ({ t, f, s = 9, y = 15 }: { t: string; f: string; s?: number; y?: number }) => (
  <text x="12" y={y} fontSize={s} fontWeight="700" textAnchor="middle" fill={f} fontFamily='"Liberation Sans", sans-serif'>{t}</text>
);
const Dog = () => <g><circle cx="18" cy="18.500" r="5.300" fill="#e0a36c" /><circle cx="13" cy="18" r="1.700" fill="#b5763f" /><circle cx="23" cy="18" r="1.700" fill="#b5763f" /><circle cx="16" cy="17.500" r=".900" /><circle cx="20" cy="17.500" r=".900" /><path d="M17 20.500H19" stroke="#222" strokeWidth="1.200" /></g>;
const BraveMark = () => <g><path d="M5 3 8 1H16L19 3 21 7 18.500 18 12 23.500 5.500 18 3 7Z" fill="#fb542b" /><path d="M7 6 10 7H14L17 6 18.500 9.500 15.500 13 16.500 15 12 19.500 7.500 15 8.500 13 5.500 9.500Z" fill="#fff" /><path d="M8 9.500 10.500 10.500M16 9.500 13.500 10.500M12 10V14.500M10.500 15.500H13.500" stroke="#fb542b" strokeWidth="1.200" /></g>;

const AP: Record<string, React.ReactNode> = {
  start: <path d="M4.500 6.500 10.500 5.600V11.500H4.500ZM11.500 5.400 19.500 4.300V11.500H11.500ZM4.500 12.500H10.500V18.400L4.500 17.500ZM11.500 12.500H19.500V19.700L11.500 18.600Z" fill="#fff" />,
  search: <g fill="none" stroke="#fff" strokeWidth="1.400"><circle cx="14" cy="9.500" r="5.300" /><path d="M10.200 13.500 4.500 20" /></g>,
  task: <g fill="none" stroke="#fff" strokeWidth="1.200"><path d="M6 9H15V15.500H6ZM4.500 4V6.500H16.500V4M4.500 20.500V18H16.500V20.500M19.500 4V7M19.500 12V20.500" /><circle cx="19.500" cy="9.500" r="1" fill="#fff" /></g>,
  explorer: <g><path d="M1 4H9L11 6H23V21H1Z" fill="#f6d671" /><path d="M1 8H23V21H1Z" fill="#ffe9a2" /><path d="M5 22V14H19V22H15V17.500H9V22Z" fill="#38b0e3" /></g>,
  store: <g><path d="M8 7V4.500Q8 1 12 1T16 4.500V7" fill="none" stroke="#ddd" strokeWidth="1.300" /><path d="M1 6H23L22.500 23H1.500Z" fill="#fff" /><path d="M7 9H11.500V13.500H7Z" fill="#f25022" /><path d="M12.500 9H17V13.500H12.500Z" fill="#7fba00" /><path d="M7 14.500H11.500V19H7Z" fill="#00a4ef" /><path d="M12.500 14.500H17V19H12.500Z" fill="#ffb900" /></g>,
  inbox: <g><path d="M0 9 12 0 24 9V21H0Z" fill="#1b3fa6" /><path d="M0 9 12 17 24 9V22H0Z" fill="#3b83ea" /><path d="M7 7 11 11 19 2" fill="none" stroke="#fff" strokeWidth="2.800" /><Dog /></g>,
  brave: <BraveMark />,
  jira: <g><path d="M4 6Q12 10 12 22Q12 10 20 6M7 20 12 12" stroke="#10386b" strokeWidth="3" fill="none" /><circle cx="6" cy="3" r="2" fill="#10386b" /><circle cx="12" cy="1.500" r="2" fill="#10386b" /><circle cx="18" cy="3" r="2" fill="#10386b" /><Dog /></g>,
  jenkins: <g><path d="M5 9Q4 0 13 0 21 1 20 10 20 19 13 20 7 19 5 9Z" fill="#f0d6b7" stroke="#333" strokeWidth=".800" /><path d="M4 9Q3 1 10 0 6 4 7 11Z" fill="#777" /><circle cx="12" cy="9" r=".900" /><circle cx="17" cy="9" r=".900" /><path d="M13 14H17" stroke="#533" /><path d="M6 17 3 24H21L18 18Z" fill="#335061" /><path d="M9 19 17 23V19L9 23Z" fill="#d33833" /></g>,
  signal: <g><rect x="1" y="1" width="22" height="22" rx="1" fill="#1b8df0" /><circle cx="12" cy="11.500" r="7" fill="#fff" /><path d="M6 14 6 18.500 11 17Z" fill="#fff" /></g>,
  win: <g><path d="M6 3Q10 1 13 3L11 11Q8 9 4 11Z" fill="#f0572a" /><path d="M14 4Q18 6 22 4L20 12Q16 14 12 12Z" fill="#82bf2e" /><path d="M4 12Q8 10 11 12L9 20Q5 18 1 20Z" fill="#2d8fe0" /><path d="M12 13Q16 15 20 13L18 22Q14 23 10 21Z" fill="#fbc31e" /><circle cx="8.500" cy="10" r="5" fill="#e6f3ff" stroke="#8fa9c2" strokeWidth="1.400" /><path d="M5 14 1 19" stroke="#9ab" strokeWidth="2" /></g>,
  emu: <g><rect x="2" y="3" width="20" height="19" fill="#555" stroke="#aaa" strokeWidth="1.500" /><rect x="5" y="6" width="14" height="12" fill="#111" /><path d="M15 8H9V16H15M9 12H14" stroke="#5c5" strokeWidth="1.500" fill="none" /></g>,
  kp: <g><circle cx="12" cy="12" r="10" fill="#0d5bea" /><circle cx="12" cy="10" r="4" fill="#fff" /><path d="M11 11H13V18H11Z" fill="#fff" /></g>,
  sublime: <g><rect x="1" y="0" width="22" height="24" rx="2" fill="#4a4a4a" /><path d="M18 3.500V8L11 10.300 18 12.500V17.500L6 21.500V17L13 14.700 6 12.500V7.500Z" fill="#ff9800" /></g>,
  qt: <g><path d="M4 4H22V16L18 20H4Z" fill="#41cd52" /><Label t="Qt" f="#fff" s={10} /><path d="M12 21Q16 14 22 15 21 22 14 22Z" fill="#ddd" /></g>,
  git: <g><path d="M12 1 22 6.500V17.500L12 23 2 17.500V6.500Z" fill="#0cb3ec" /><path d="M8 7H16V13H8ZM12 10V19M9.500 16H14.500" stroke="#fff" strokeWidth="1.600" fill="none" /></g>,
  mon: <g><rect x="1" y="4" width="22" height="13" fill="#eee" /><path d="M9 17H15V20H9ZM7 20H17V21.500H7Z" fill="#ccc" /><Label t="u" f="#777" s={9} y={13} /></g>,
  slack: <g><path d="M2 2H14V16H2Z" fill="#3eb991" /><path d="M14 2H20V12H14Z" fill="#e9a820" /><path d="M5 4H19V18H5Z" fill="#fff" /><Label t="S" f="#333" s={11} y={14} /><circle cx="17" cy="17.500" r="7" fill="#f1525c" /><text x="17" y="20.800" fontSize="9" textAnchor="middle" fill="#fff" fontFamily="Liberation Sans">35</text></g>,
  pc: <g><path d="M1 4 12 1 21 3 23 14 15 23 3 20Z" fill="#21d789" /><path d="M14 2 23 8 20 22 12 22Z" fill="#f5ec4f" /><rect x="4.500" y="4.500" width="15" height="15" fill="#000" /><Label t="PC" f="#fff" s={8.500} y={12.500} /><path d="M6.500 17H12" stroke="#fff" strokeWidth="1.300" /></g>,
  flags: <g><path d="M9 4 22 1 23 10 12 13Z" fill="#b3202c" /><path d="M2 10 10 8 14 15 6 19Z" fill="#23a24a" /><path d="M10 16 19 13 21 20 11 23Z" fill="#1c75d8" /></g>,
  dial: <g><circle cx="12" cy="12" r="10.500" fill="#dfe5e8" /><path d="M9 2A10.300 10.300 0 1 0 16 21.500Q20 12 13 2Z" fill="#19a33e" /><circle cx="10.500" cy="12" r="5" fill="none" stroke="#0b4d1c" strokeWidth="1.200" /><path d="M6 6 11 12" stroke="#fff" strokeWidth="1.500" /></g>,
  droid: <g><circle cx="12" cy="12" r="10.500" fill="#dfe5e8" /><path d="M9 2A10.300 10.300 0 1 0 16 21.500Q20 12 13 2Z" fill="#1d7f35" /><ellipse cx="11" cy="13" rx="3" ry="5.500" fill="#9be04a" /></g>,
  p: <g fill="none" stroke="#1d7fa8" strokeWidth="2.500"><path d="M3 3H16Q22 3 22 9T16 15H7V21H12" /><path d="M3 9H13" stroke="#45b8dd" /></g>,
  vs: <path d="M17 1 23 3.500V20.500L17 23 8 14.500 3.500 18 1 17V7L3.500 6 8 9.500ZM17 7.500 11.500 12 17 16.500ZM3.500 9.500V14.500L6 12Z" fill="#b179f1" fillRule="evenodd" stroke="#f0e2ff" strokeWidth=".800" />,
  ard: <g><circle cx="11" cy="11" r="10" fill="#3b4750" /><circle cx="7" cy="12" r="3.500" fill="none" stroke="#fff" strokeWidth="1.600" /><circle cx="14.500" cy="12" r="3.500" fill="none" stroke="#fff" strokeWidth="1.600" /><path d="M14 12H22V24H13Z" fill="#7c6a4c" /><circle cx="18" cy="14" r="3.500" fill="#d7b48e" /></g>,
  eagle: <path d="M4 2H20V7H11V10H18V14H11V17H20V22H4V18L7 17V7L4 6Z" fill="#d9812a" />,
  ai: <g><rect x="2" y="1.500" width="20" height="21" fill="#261300" stroke="#ff7c00" strokeWidth="1.500" /><Label t="Ai" f="#ff7c00" s={12} y={16} /></g>,
  unity: <g><path d="M12 1 22 6.500V17.500L12 23 2 12Z" fill="#fff" /><path d="M12 12H22M12 12 7 4M12 12 7 20" stroke="#222" strokeWidth="2.500" /></g>,
};

function Task({ n, u, on, w = "w-[48.900px]" }: { n: string; u?: boolean; on?: string; w?: string }) {
  return (
    <div className={"flex h-10 shrink-0 flex-col items-center " + w + " " + (on ?? "")}>
      <div className="flex h-[38px] items-center"><App24>{AP[n]}</App24></div>
      {u && <div className={"h-[2px] bg-[#aacfdc] " + (on ? "w-full" : "w-[40px]")} />}
    </div>
  );
}
const Pen = () => <svg viewBox="0 0 18 18" className="size-[18px]" fill="none" stroke="#fff" strokeWidth="1.200"><path d="M5 12 12 2Q14 1 14 4L8 14 4.500 16ZM5 12Q1 11 1 14T5 16M13 8Q17 8 15 11T10 12" /></svg>;

function LeftTaskbar() {
  const rest: [string, boolean][] = [["jira", true], ["jenkins", false], ["signal", true], ["win", true], ["emu", true], ["kp", false], ["sublime", true], ["qt", false], ["git", true], ["mon", false], ["slack", true], ["pc", false], ["flags", false], ["dial", false], ["droid", false], ["p", false], ["vs", true], ["ard", true], ["eagle", true], ["ai", true]];
  return (
    <div className="flex h-10 shrink-0 bg-linear-to-r from-[#0f100f] via-[#15110f] to-[#171310] font-['Open_Sans',sans-serif] text-[12px] text-white">
      <Task n="start" w="w-[48px]" /><Task n="search" w="w-[48px]" /><Task n="task" w="w-[50px]" />
      <Task n="explorer" u /><Task n="store" /><Task n="inbox" u />
      <Task n="brave" u on="bg-[#454746]" w="w-[49px]" />
      <div className="w-[1.500px]" />
      {rest.map(([n, u]) => <Task key={n} n={n} u={u} />)}
      <div className="ml-[5px] flex h-10 w-[41px] flex-col items-center border-b-2 border-[#3fe03c] bg-[#343330]"><div className="flex h-full w-full items-center justify-center border-l-[6px] border-[#2f6a2c] pr-1"><App24>{AP.unity}</App24></div></div>
      <div className="flex-1" />
      <svg viewBox="0 0 70 20" className="mt-[10px] h-5 w-[70px]" fill="none" stroke="#fff" strokeWidth="1.300"><path d="M3 13 9 7 15 13M26 5H39V14H28M33 14V17M30 17.500H37M26 5V9H29V5M49 8H51L55 4V16L51 12H49ZM58 8Q60 10 58 12M60.500 6Q64 10 60.500 14" /></svg>
      <div className="mt-[11px] ml-[4px]"><Pen /></div>
      <div className="ml-[14px] flex w-[21px] flex-col items-center pt-[3px] leading-[18px]"><T w={21}>MRI</T><T w={14}>MI</T></div>
      <div className="ml-[14px] flex w-[52px] flex-col items-center pt-[3px] leading-[18px]"><T w={42}>3:52 PM</T><T w={52}>9/20/2018</T></div>
      <svg viewBox="0 0 32 32" className="mt-[6px] ml-[16px] size-8"><path d="M2 3H18V17H8L5 20V17H2Z" fill="#fff" /><path d="M5 7H15M5 10H15M5 13H12" stroke="#111" strokeWidth="1.300" /><circle cx="17" cy="20" r="9.500" fill="#3a3a3a" stroke="#999" /><text x="17" y="24" fontSize="11.500" fill="#fff" textAnchor="middle" fontFamily="Open Sans">25</text></svg>
      <div className="mr-[3px] ml-[7px] w-px bg-[#555]" />
    </div>
  );
}

function RightTaskbar() {
  return (
    <div className="flex h-[41px] shrink-0 border-t border-black bg-[linear-gradient(to_right,#050505_0%,#1a1c1a_12%,#2c2c2a_25%,#2b2b29_60%,#262624_72%,#10100d_80%,#070707_90%)] font-['Open_Sans',sans-serif] text-[12px] text-white">
      <Task n="start" w="w-[48px]" /><Task n="search" w="w-[48px]" /><Task n="task" w="w-[50.500px]" />
      <Task n="explorer" u /><Task n="win" u /><Task n="jira" u /><Task n="slack" u /><Task n="inbox" u />
      <Task n="brave" u on="bg-[#545452]" w="w-[49px]" />
      <div className="flex-1" />
      <div className="mt-[11px]"><Pen /></div>
      <div className="mr-[6px] ml-[13px] flex w-[52px] flex-col items-center pt-[2px] leading-[18px]"><T w={42}>3:52 PM</T><T w={52}>9/20/2018</T></div>
    </div>
  );
}

/* ---------- browser window ---------- */

const Osh = () => <svg viewBox="0 0 16 16" className="size-4 shrink-0"><circle cx="8" cy="8" r="8" fill="#3d2740" /><circle cx="8" cy="8" r="5.300" fill="none" stroke="#e9dfea" strokeWidth="2" strokeDasharray="1.600 1.200" /><circle cx="8" cy="8" r="3.500" fill="#6b4a6d" /></svg>;
const Auto = () => <svg viewBox="0 0 16 16" className="size-4 shrink-0"><path d="M1 15 6 0H9L4 15Z" fill="#1a6fc4" /><path d="M6 0H10L15.500 15H11L7 4Z" fill="#2aa56a" /><path d="M4 15 10 10 11 12Z" fill="#8cc63f" /></svg>;
const Uni = () => <svg viewBox="0 0 16 16" className="size-4 shrink-0"><rect width="16" height="16" fill="#1b2530" /><path d="M3.500 8 11 3V13ZM5 8H11" stroke="#fff" strokeWidth="1.400" fill="none" /></svg>;
const Ext = ({ c = "#333" }: { c?: string }) => <svg viewBox="0 0 16 16" className="size-4 shrink-0" fill="none" stroke={c} strokeWidth="1.300"><circle cx="8" cy="8.500" r="4.500" /><path d="M3 2 5 5M2.500 8V4L5 2.500M13 15 11 12M13.500 9V13L11 14.500" /></svg>;

const tabs: [React.ReactNode, string, number][] = [
  [<Uni />, "https://docs.u", 70], [<Uni />, "https://docs.u", 72],
  [<svg viewBox="0 0 16 16" className="size-4 shrink-0"><rect width="16" height="16" rx="1.500" fill="#0f9d58" /><path d="M4 4H12V12H4ZM4 6.700H12M4 9.300H12M7 4V12" stroke="#fff" strokeWidth="1.200" fill="none" /></svg>, "https://docs.g", 70],
  [<svg viewBox="0 0 16 16" className="size-4 shrink-0" fill="none" strokeWidth="2.500"><circle cx="8" cy="8" r="8" fill="#fff" stroke="none" /><path d="M11.500 4.800A4.800 4.800 0 0 0 4 5.500" stroke="#ea4335" /><path d="M4 5.500A5 5 0 0 0 4 10.500" stroke="#fbbc05" /><path d="M4 10.500A4.800 4.800 0 0 0 11 11.700" stroke="#34a853" /><path d="M8 8.200H12.800Q12.800 10.500 11 11.700" stroke="#4285f4" /></svg>, "https://www.g", 71],
  [<svg viewBox="0 0 16 16" className="size-4 shrink-0"><rect width="16" height="16" rx="2" fill="#4cc3ff" /><path d="M8 3.500A3 3 0 0 1 9.500 9.200V12H6.500V9.200A3 3 0 0 1 8 3.500ZM3 3 4 4M13 3 12 4M2.500 7H3.500M12.500 7H13.500" fill="#fff" stroke="#fff" /></svg>, "https://www.r", 71],
  [<svg viewBox="0 0 16 16" className="size-4 shrink-0" fill="none" stroke="#2f62ac"><circle cx="8" cy="8" r="7" strokeWidth="1.800" strokeDasharray="2 1" /><circle cx="8" cy="7" r="4" strokeWidth="1.500" /><circle cx="8" cy="7" r="1.500" fill="#2f62ac" /><path d="M8 8V15" strokeWidth="1.500" /></svg>, "https://www.i", 70],
  [<Auto />, "https://www.a", 73],
  [<svg viewBox="0 0 16 16" className="size-4 shrink-0"><circle cx="8" cy="8" r="7.500" fill="#3d4c87" /><path d="M0 5H16V11H0Z" fill="#3a2f20" /><text x="8" y="10.500" fontSize="7.500" fontWeight="700" textAnchor="middle" fill="#e3b23c" fontFamily="Liberation Sans">URI</text></svg>, "http://www.e", 69],
  [<svg viewBox="0 0 16 16" className="size-4 shrink-0"><rect y="2" width="16" height="12" rx="3" fill="#f00" /><path d="M6.500 5.500 11 8 6.500 10.500Z" fill="#fff" /></svg>, "https://www.y", 71],
  [<Ext />, "chrome-exter", 72], [<Ext />, "chrome-exter", 72], [<Ext />, "chrome-exter", 72], [<Ext />, "chrome-exter", 72],
  [<Osh />, "OSH Park Doc", 72], [<Osh />, "OSH Park ~", 60], [<Ext c="#ddd" />, "a9e61d6c7de", 72],
  [<svg viewBox="0 0 16 16" className="size-4 shrink-0" fill="none" strokeWidth="2"><path d="M4 1Q4 5 8 8T12 15" stroke="#1d8fd0" /><path d="M12 1Q12 5 8 8T4 15" stroke="#30b8e8" /></svg>, "\"must sync be", 71],
];

function BrowserTop() {
  return (
    <>
      <div className="flex h-[69px] shrink-0 flex-col border-b border-[#bfc3c7] bg-linear-to-b from-[#f6f6f6] to-[#e6e6e6]">
        <div className="flex h-[36px] shrink-0 items-center pt-[4px] text-[13px]">
          <svg viewBox="0 0 50 14" className="ml-[16px] h-[14px] w-[50px]" fill="none" stroke="#b9b9b9" strokeWidth="1.500"><path d="M11 1V13L2 7ZM36 1V13L45 7Z" /></svg>
          <svg viewBox="0 0 48 16" className="ml-[364px] h-4 w-[48px]" fill="none" stroke="#6a6e73" strokeWidth="2"><path d="M12 4A6 6.300 0 1 0 13 10.500M8 5H13V1M38 1H47V15L42.500 11.500 38 15Z" /></svg>
          <div className="ml-[14px] flex h-[28px] w-[793px] shrink-0 items-center rounded-sm border border-[#ccc] bg-white pl-[13px] text-[#333]">
            <svg viewBox="0 0 12 14" className="h-[14px] w-3 shrink-0" fill="none" stroke="#555" strokeWidth="1.300"><rect x="1" y="6" width="10" height="7" rx="1" /><path d="M3.500 6V3.500Q3.500 1 6 1T8.500 3.500V6" /></svg>
            <T w={720} className="ml-[8px]">https://644db4de3505c40a0444-327723bce298e3ff5813fb42baeefbaa.ssl.cf1.rackcdn.com/a9e61d6c7de3e5c47db89d5dc82...</T>
            <T w={26} className="ml-[3px] text-[#4a9ff5]">1.88s</T>
          </div>
          <svg viewBox="0 0 16 18" className="ml-[11px] h-[18px] w-4" fill="none" stroke="#6a6e73" strokeWidth="1.600"><path d="M8 1 15 4.500V13.500L8 17 1 13.500V4.500Z" /><path d="M8 12.500 4.500 8.500Q5 5.500 8 7 11 5.500 11.500 8.500Z" fill="#6a6e73" stroke="none" /></svg>
          <svg viewBox="0 0 17 17" className="ml-[366px] size-[17px]"><rect width="17" height="17" rx="2" fill="#d32d2a" /><path d="M3 8.500H5M6.500 8.500H8.500M10 8.500H12M14 6V11" stroke="#fff" strokeWidth="2" /></svg>
          <div className="ml-[12px] h-[20px] w-px bg-[#ccc]" />
          <svg viewBox="0 0 24 24" className="ml-[8px] size-[24px]"><BraveMark /></svg>
          <svg viewBox="0 0 10 14" className="ml-[14px] h-[14px] w-[10px]" stroke="#6a6e73" strokeWidth="1.800"><path d="M0 2H10M0 7H10M0 12H10" /></svg>
          <div className="ml-[17px] h-[20px] w-px bg-[#ccc]" />
          <svg viewBox="0 0 104 12" className="-mt-[6px] ml-[19px] h-3 w-[104px]" fill="none" stroke="#222" strokeWidth="1.200"><path d="M1 8H11M46 4H53V11.500H46ZM48 4V1.500H55V9.500H53M93 1 102 11M102 1 93 11" /></svg>
        </div>
        <div className="flex h-[32px] items-center text-[11.500px] text-[#666]">
          <T w={70} className="ml-[37px]">graph - Subs...</T><T w={68} className="ml-[38px]">pymel.core.s...</T>
          <div className="ml-[19px]"><Auto /></div><T w={69} className="ml-[5px]">Maya API: M...</T>
          <div className="ml-[19px]"><Osh /></div><T w={68} className="ml-[4px]">https://oshp...</T>
        </div>
      </div>
      <div className="flex h-[29px] shrink-0 bg-[#c9cdd2] text-[12px]">
        {tabs.map(([ic, t, w], i) => (
          <div key={i} className={"flex w-[111.300px] shrink-0 items-center gap-[6px] border-r border-[#b2b6bb] pl-[9px] " + (i === 15 ? "bg-[#0e0e0e] text-white" : "text-[#333]")}>
            {ic}<T w={w} className="[mask-image:linear-gradient(to_right,black_82%,rgba(0,0,0,.25))]">{t}</T>
          </div>
        ))}
        <svg viewBox="0 0 28 29" className="h-[29px] w-7"><path d="M14 9V20M8.500 14.500H19.500" stroke="#666" strokeWidth="1.800" /></svg>
      </div>
    </>
  );
}

const rl: [number, string, number][] = [[197.600, "RX", 32], [248, "TX", 31], [298, "2", 13], [348, "3", 13], [398, "4", 13], [448, "5", 13], [498, "6", 13], [548, "7", 13], [623, "8", 13], [673, "9", 13], [723, "10", 32], [773, "11", 32], [823, "12", 32], [873, "13", 32], [923, "GND", 53], [973, "AREF", 65]];
const rr: [number, string, number][] = [[197.600, "5", 14], [248, "4", 14], [298, "3", 14], [348, "2", 14], [398, "1", 14], [448, "0", 14], [548, "VIN", 44], [598, "GND", 53], [648, "GND", 53], [698, "+5V", 53], [748, "+3.3V", 77], [798, "RST", 47], [848, "IOREF", 76], [898, "", 0]];

function Render() {
  const L = "#c6b4d5", C = "#3f1261", P = "#b08781", K = "#585855";
  const cols: [number, number][] = [[3112, 3213], [3262, 3363], [3461, 3563]];
  return (
    <svg viewBox="2560 98 1905 881" className="h-[881px] w-[1905px] bg-[#0e0e0e]">
      <path d="M2987 985V173.500L3011.800 148.300H3237L3287 98.500H3937.500L3986 148.300H4036.500V985Z" fill="#330055" stroke="#000" strokeWidth="1.200" />
      <path d="M3236 298H3437V824H3236ZM3636 298H3837V824H3636Z" fill={C} />
      <S x0={3161} x1={3213} y={323} size={32} t="top" bold fill={C} />
      <S x0={3262} x1={3313} y={323} size={32} t="top" bold fill={C} stroke="#330055" sw={6} />
      <S x0={3461} x1={3513} y={323} size={32} t="top" bold fill={C} />
      {cols.map(([a, b]) => (
        <g key={a}><S x0={a} x1={b} y={373} size={32} t="tplace" bold fill={L} /><S x0={a} x1={b - 1} y={473} size={32} t="tname" bold fill={L} /></g>
      ))}
      <S x0={3144} x1={3230} y={422.500} size={32} t="tstop" bold fill={K} />
      <S x0={3269} x1={3355} y={422.500} size={32} t="tstop" bold fill={P} />
      <S x0={3444} x1={3530} y={422.500} size={32} t="tstop" bold fill={K} />
      {rl.map(([y, t, w]) => <S key={y} x0={3061} x1={3061 + w} y={y + 11} size={25.500} t={t} fill={L} stroke={L} sw={0.500} />)}
      {rr.map(([y, t, w]) => t && <S key={y} x0={3961 - w} x1={3961} y={y + 11} size={25.500} t={t} fill={L} stroke={L} sw={0.500} />)}
      <clipPath id="mask"><path d="M3086 498H3887V574L3612 848.600H3161L3086 774Z" /></clipPath>
      <g clipPath="url(#mask)">
        <rect x="3080" y="490" width="820" height="370" fill={K} />
        <path d="M3236 498H3437V824H3236ZM3636 498H3837V824H3636Z" fill={P} />
        <S x0={3161} x1={3213} y={548} size={32} t="top" bold fill={P} />
        <S x0={3262} x1={3313} y={548} size={32} t="top" bold fill={P} stroke={K} sw={5} />
        <S x0={3461} x1={3513} y={548} size={32} t="top" bold fill={P} />
      </g>
      {[...rl.map(([y]) => [3036, y]), ...rr.map(([y]) => [3986, y])].map(([x, y]) => (
        <g key={x + "-" + y}><circle cx={x} cy={y} r={18.800} fill={P} stroke={K} strokeWidth={2} /><circle cx={x} cy={y} r={10.200} fill="#000" /></g>
      ))}
    </svg>
  );
}

const dl: [string, number, string, number, boolean?][] = [
  ["used_layers.zip", 72, "https://www.element14.com", 136],
  ["import_bitmap.ulp", 89, "https://learn.adafruit.com", 123],
  ["import_dxf_polygons_v4.ulp", 135, "https://raw.githubuserconten...", 150],
  ["Eagle-ULPs-master.zip", 108, "https://codeload.github.com", 138],
  ["SparkFun_SX1509_Arduino_Li...", 149, "https://codeload.github.com", 138],
  ["ArduinoCreateAgent-1.1-win...", 148, "https://downloads.arduino.cc", 141],
  ["oshpark-2layer.dru", 91, "https://raw.githubuserconten...", 150],
  ["2n390x.dev", 54, "http://www.ele.uri.edu", 107, true],
];

function Downloads() {
  return (
    <div className="flex h-[60px] shrink-0 items-start gap-[10px] border-t border-[#8a8a8a] bg-[#e5e5e5] pt-[5px] pl-[19px] text-[11.500px] text-[#222]">
      {dl.map(([n, nw, u, uw, lock]) => (
        <div key={n} className="flex h-[50px] w-[200px] shrink-0 items-center rounded-[2px] border border-[#c2c2c2] pl-[14px]">
          <div className="flex flex-col leading-[15px]">
            <T w={nw}>{n}</T>
            <div className="flex items-center">
              {lock && <svg viewBox="0 0 12 12" className="mr-[1px] h-3 w-[11px]"><rect x="0" y="5" width="8" height="6.500" fill="#c9302c" /><path d="M6 5V3Q6 1 8 1T10 3V5" fill="none" stroke="#c9302c" strokeWidth="1.500" /></svg>}
              <T w={uw}>{u}</T>
            </div>
            <T w={56} className="font-bold text-black">Completed</T>
          </div>
          <Caret className="mr-[15px] ml-auto" />
        </div>
      ))}
      <div className="mt-[9px] ml-[82px] flex h-[32px] w-[82px] shrink-0 items-center justify-center rounded-sm bg-linear-to-b from-white to-[#eee] text-[13px] text-[#555] shadow-[0_1px_3px_rgba(0,0,0,.35)]"><T w={47}>View All</T></div>
      <svg viewBox="0 0 14 14" className="mt-[18px] ml-[11px] size-[14px]"><path d="M1 1 13 13M13 1 1 13" stroke="#555" strokeWidth="1.800" /></svg>
    </div>
  );
}

export default function App() {
  return (
    <div className="h-[1317px] w-[4096px] overflow-hidden bg-black">
      <div className="flex h-[1440px] w-[4480px] items-start bg-black [zoom:0.9142857]">
        <div className="flex h-[1440px] w-[2560px] shrink-0 flex-col bg-[#f0f0f0] font-['DejaVu_Sans_Condensed','DejaVu_Sans',sans-serif]">
          <TopBars />
          <div className="flex h-[1242px] shrink-0 overflow-hidden"><SideBar /><DesignManager /><Editor /></div>
          <div className="flex h-[27px] shrink-0 items-center border-t-[1.500px] border-[#8a8a8a] bg-[#eee] pl-[3px] text-[12px] text-[#333]">
            <T w={800}>'C:\Users\krice\Documents\EAGLE\projects\Table\test.brd' saved. Left-click &amp; drag to define group (or left-click to start defining a group polygon)</T>
            <div className="mr-[21px] ml-auto flex h-[24px] w-[22px] items-center justify-center border-x border-[#ccc]"><svg viewBox="0 0 16 16" className="size-[15px]"><path d="M10 0 1 9H6L4 16 15 6H9.500Z" fill="#fba919" /></svg></div>
          </div>
          <LeftTaskbar />
        </div>
        <div className="flex h-[1080px] w-[1920px] shrink-0 flex-col font-['Open_Sans',sans-serif]">
          <BrowserTop />
          <div className="flex h-[881px] shrink-0 bg-[#f1f1f1]">
            <Render />
            <div className="flex w-[15px] flex-col items-center">
              <svg viewBox="0 0 15 17" className="h-[17px] w-[15px]"><path d="M4 11H11L7.500 7Z" fill="#999" /></svg>
              <div className="h-[580px] w-[13px] bg-[#c1c1c1]" />
              <svg viewBox="0 0 15 17" className="mt-auto h-[17px] w-[15px]"><path d="M4 7H11L7.500 11Z" fill="#555" /></svg>
            </div>
          </div>
          <Downloads />
          <RightTaskbar />
        </div>
      </div>
    </div>
  );
}
